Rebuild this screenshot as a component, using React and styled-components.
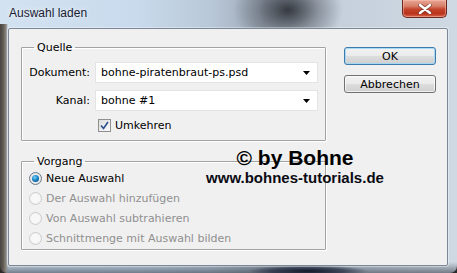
import React from 'react'
import styled, { createGlobalStyle, css } from 'styled-components'

const GlobalStyle = createGlobalStyle`
  html, body {
    margin: 0;
    padding: 0;
    background: #2b2b2b;
  }
  body {
    font-family: "DejaVu Sans", Verdana, sans-serif;
    font-size: 11px;
    color: #000;
  }
`

const Window = styled.div`
  position: relative;
  width: 457px;
  height: 273px;
  box-sizing: border-box;
  display: flex;
  flex-direction: column;
  padding: 0 9px 7px 8px;
  overflow: hidden;
  border-radius: 0 0 7px 7px;
  background:
    radial-gradient(ellipse 55px 38px at 288px 10px, rgba(34, 36, 42, 0.85), rgba(70, 74, 82, 0.4) 55%, transparent 100%),
    radial-gradient(ellipse 60px 6px at 308px 271px, #121a2c, rgba(20, 28, 50, 0.6) 60%, transparent 100%),
    linear-gradient(to right, #4a4540 0, #5e5852 3px, #8b8780 6px, rgba(180, 190, 200, 0) 8px) 0 24px / 9px 100% no-repeat,
    linear-gradient(to bottom, rgba(255, 255, 255, 0) 262px, rgba(40, 48, 60, 0.55) 273px),
    linear-gradient(to right, #d3e2f1 0%, #c8daec 30%, #b9c8d8 46%, #9aa6b4 58%, #c5d0dc 74%, #cfd9e3 100%);
`

const TitleBar = styled.div`
  height: 28px;
  flex-shrink: 0;
  display: flex;
  align-items: flex-start;
`

const Title = styled.div`
  margin: 6px 0 0 1px;
  font-family: "Liberation Sans", Arial, sans-serif;
  font-size: 12px;
  line-height: 14px;
  color: #1b2133;
  text-shadow: 0 0 6px rgba(255, 255, 255, 0.9);
`

const CloseButton = styled.div`
  margin-left: auto;
  margin-right: 1px;
  width: 45px;
  height: 18px;
  box-sizing: border-box;
  border: 1px solid #6c2a1f;
  border-top: none;
  border-radius: 0 0 5px 5px;
  background: linear-gradient(to bottom, #e9a795 0%, #d8806b 35%, #c4442a 55%, #b8341c 80%, #d9664c 100%);
  box-shadow: inset 0 0 0 1px rgba(255, 200, 190, 0.45);
  display: flex;
  align-items: center;
  justify-content: center;
`

const Panel = styled.div`
  flex: 1;
  display: flex;
  align-items: flex-start;
  padding: 12px 0 0 12px;
  background: #f0f0f0;
  border: 1px solid #7d8896;
  border-radius: 2px;
  box-shadow: 0 0 0 1px rgba(255, 255, 255, 0.35);
`

const Main = styled.div`
  display: flex;
  flex-direction: column;
  gap: 14px;
`

const Group = styled.fieldset`
  margin: 0;
  width: 305px;
  box-sizing: border-box;
  border: 1px solid #a3a3a3;
  border-radius: 1px;
  box-shadow: inset 1px 1px 0 #fff, 1px 1px 0 #fff;
  padding: ${p => p.$pad};
  display: flex;
  flex-direction: column;
`

const Legend = styled.legend`
  margin-left: 12px;
  padding: 0 3px;
  font-size: 11px;
  line-height: 13px;
`

const FieldRow = styled.div`
  display: flex;
  align-items: center;
  margin-bottom: 7px;
`

const Label = styled.div`
  width: 68px;
  margin-right: 5px;
  text-align: right;
  line-height: 13px;
`

const Select = styled.div`
  width: 223px;
  height: 21px;
  box-sizing: border-box;
  border: 1px solid #e4e4e4;
  background: #fff;
  display: flex;
  align-items: center;
  padding: 0 7px 0 5px;
  line-height: 13px;

  span {
    flex: 1;
  }
`

const CheckRow = styled.div`
  display: flex;
  align-items: center;
  margin: 1px 0 0 76px;
  gap: 4px;
  line-height: 13px;
`

const CheckBox = styled.div`
  width: 13px;
  height: 13px;
  box-sizing: border-box;
  border: 1px solid #8e8f8f;
  background: linear-gradient(135deg, #dcdcdc, #fbfbfb);
  display: flex;
  align-items: center;
  justify-content: center;
`

const RadioRow = styled.div`
  height: 20px;
  display: flex;
  align-items: center;
  gap: 4px;
  padding-left: 7px;
  color: ${p => (p.$disabled ? '#8f8f8f' : '#000')};
`

const Radio = styled.div`
  width: 13px;
  height: 13px;
  box-sizing: border-box;
  border-radius: 50%;
  display: flex;
  align-items: center;
  justify-content: center;
  ${p =>
    p.$checked
      ? css`
          border: 1px solid #6e7b88;
          background: radial-gradient(circle, #f4f4f4 40%, #c9ced4 100%);
          &::after {
            content: '';
            width: 7px;
            height: 7px;
            border-radius: 50%;
            background: radial-gradient(circle at 40% 35%, #7fd3f5 0%, #1a86c8 45%, #0b3f6e 100%);
          }
        `
      : css`
          border: 1px solid #cdcdcd;
          background: radial-gradient(circle, #f8f8f8 50%, #e6e6e6 100%);
        `}
`

const Buttons = styled.div`
  margin: 6px 0 0 18px;
  display: flex;
  flex-direction: column;
  gap: 10px;
`

const Button = styled.div`
  width: 92px;
  height: 18px;
  box-sizing: border-box;
  border: 1px solid ${p => (p.$primary ? '#3d7bad' : '#707070')};
  border-radius: 3px;
  background: linear-gradient(to bottom, #f2f2f2 0%, #ebebeb 48%, #dddddd 52%, #cfcfcf 100%);
  box-shadow: inset 0 0 0 1px ${p => (p.$primary ? 'rgba(160, 215, 245, 0.9)' : 'rgba(255, 255, 255, 0.7)')};
  display: flex;
  align-items: center;
  justify-content: center;
  line-height: 13px;
`

const Watermark = styled.div`
  position: absolute;
  left: 195px;
  top: 147px;
  width: 200px;
  text-align: center;
  font-family: "Liberation Sans", Arial, sans-serif;
  font-weight: bold;
  color: #000;
`

const Big = styled.div`
  font-size: 21px;
  line-height: 21px;
`

const Small = styled.div`
  margin-top: 2px;
  font-size: 15px;
  line-height: 15px;
  color: #0b0b14;
`

const Arrow = () => (
  <svg width="7" height="4" viewBox="0 0 7 4">
    <polygon points="0,0 7,0 3.5,4" fill="#000" />
  </svg>
)

const radios = [
  { label: 'Neue Auswahl', checked: true },
  { label: 'Der Auswahl hinzufügen', disabled: true },
  { label: 'Von Auswahl subtrahieren', disabled: true },
  { label: 'Schnittmenge mit Auswahl bilden', disabled: true },
]

export default function App() {
  return (
    <>
      <GlobalStyle />
      <Window>
        <TitleBar>
          <Title>Auswahl laden</Title>
          <CloseButton>
            <svg width="14" height="10" viewBox="0 0 14 10">
              <path d="M2 1 L12 9 M12 1 L2 9" stroke="#5a2a22" strokeWidth="4" strokeLinecap="round" opacity="0.6" />
              <path d="M2 1 L12 9 M12 1 L2 9" stroke="#fff" strokeWidth="2.4" strokeLinecap="round" />
            </svg>
          </CloseButton>
        </TitleBar>
        <Panel>
          <Main>
            <Group $pad="8px 7px 8px 0">
              <Legend>Quelle</Legend>
              <FieldRow>
                <Label>Dokument:</Label>
                <Select>
                  <span>bohne-piratenbraut-ps.psd</span>
                  <Arrow />
                </Select>
              </FieldRow>
              <FieldRow>
                <Label>Kanal:</Label>
                <Select>
                  <span>bohne #1</span>
                  <Arrow />
                </Select>
              </FieldRow>
              <CheckRow>
                <CheckBox>
                  <svg width="9" height="9" viewBox="0 0 9 9">
                    <path d="M1 4.5 L3.5 7.5 L8 1" stroke="#2c4f8f" strokeWidth="1.6" fill="none" />
                  </svg>
                </CheckBox>
                <span>Umkehren</span>
              </CheckRow>
            </Group>
            <Group $pad="0 7px 1px 0">
              <Legend>Vorgang</Legend>
              {radios.map(r => (
                <RadioRow key={r.label} $disabled={r.disabled}>
                  <Radio $checked={r.checked} />
                  <span>{r.label}</span>
                </RadioRow>
              ))}
            </Group>
          </Main>
          <Buttons>
            <Button $primary>OK</Button>
            <Button>Abbrechen</Button>
          </Buttons>
        </Panel>
        <Watermark>
          <Big>© by Bohne</Big>
          <Small>www.bohnes-tutorials.de</Small>
        </Watermark>
      </Window>
    </>
  )
}
